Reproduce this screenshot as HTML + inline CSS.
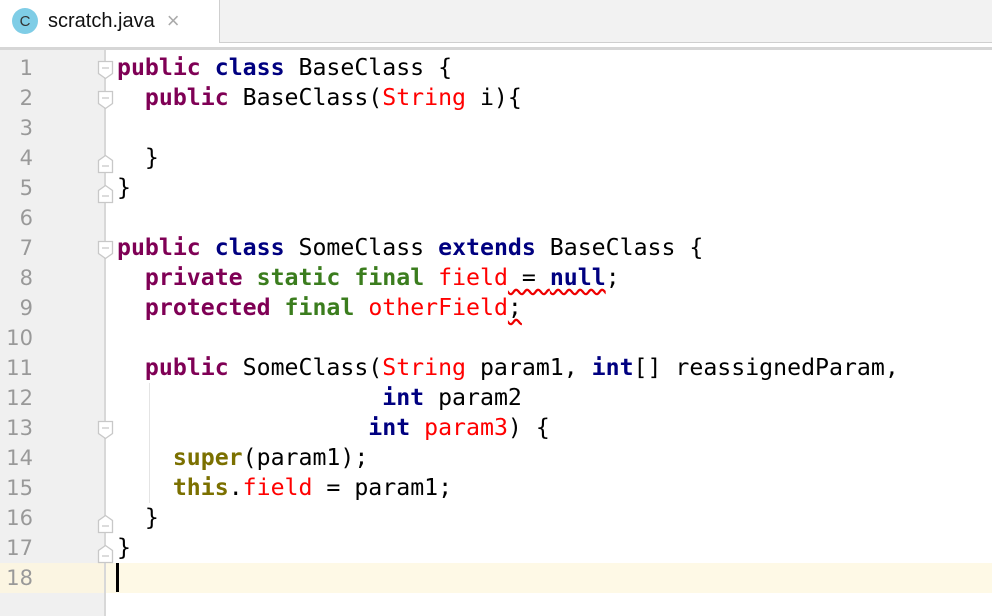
<!DOCTYPE html>
<html><head><meta charset="utf-8"><style>
*{margin:0;padding:0;box-sizing:border-box}
body{width:992px;height:616px;overflow:hidden;background:#fff;position:relative;font-family:"DejaVu Sans Mono",monospace}
.tabbar{position:absolute;left:0;top:0;width:992px;height:50px;background:#fff}
.tabrest{position:absolute;left:219px;top:0;right:0;height:43px;background:#f2f2f2;border-left:1px solid #cfcfcf;border-bottom:1px solid #cfcfcf}
.sep{position:absolute;left:0;top:47px;width:992px;height:3px;background:#d6d6d6}
.tab{position:absolute;left:12px;top:6px;height:30px;display:flex;align-items:center;font-family:"Liberation Sans",sans-serif;font-size:20px;color:#111}
.ic{width:26px;height:26px;border-radius:50%;background:#7fcde6;color:#333;font-size:15px;display:flex;align-items:center;justify-content:center;margin-right:10px}
.x{color:#aaa;font-size:22px;margin-left:12px}
.gutter{position:absolute;left:0;top:50px;width:104px;height:566px;background:#f0f0f0}
.gline{position:absolute;left:104px;top:50px;width:2px;height:566px;background:#d8d8d8}
.hl{position:absolute;left:0;top:563px;width:992px;height:30px;background:#fef9e6}
.hl2{position:absolute;left:0;top:563px;width:104px;height:30px;background:#fbf5e2}
.nums{position:absolute;left:0;width:33px;text-align:right;top:53px;font-family:"DejaVu Sans",sans-serif;font-size:21px;color:#999;line-height:30px}
.code{position:absolute;left:117px;top:53px;font-size:23.2px;line-height:30px;color:#000;white-space:pre}
.k{color:#7f0055;font-weight:bold}.b{color:#000080;font-weight:bold}.g{color:#3b7d1e;font-weight:bold}.r{color:#f00}.o{color:#7b7000;font-weight:bold}
.w{text-decoration:underline wavy #e00;text-decoration-skip-ink:none;text-underline-offset:3px}
.guide{position:absolute;left:149px;top:383px;width:1px;height:120px;background:#e4e4e4}
.caret{position:absolute;left:116px;top:563px;width:3px;height:29px;background:#000}
svg{position:absolute;left:0;top:0}
</style></head><body>
<div class="tabbar"><div class="tabrest"></div><div class="sep"></div>
<div class="tab"><div class="ic">C</div>scratch.java<span class="x">×</span></div></div>
<div class="gutter"></div><div class="hl"></div><div class="hl2"></div><div class="gline"></div>
<div class="guide"></div>
<div class="nums">1<br>2<br>3<br>4<br>5<br>6<br>7<br>8<br>9<br>10<br>11<br>12<br>13<br>14<br>15<br>16<br>17<br>18</div>
<svg width="992" height="616" fill="#fff" stroke="#c8c8c8" stroke-width="1.3">
<g id="o"><path d="M98.5 61.5h14v12l-7 5-7-5z"/><path d="M102 68h7"/></g>
<use href="#o" y="30"/><use href="#o" y="180"/><use href="#o" y="360"/>
<g id="c"><path d="M98.5 172.5h14v-12l-7-5-7 5z"/><path d="M102 166h7"/></g>
<use href="#c" y="30"/><use href="#c" y="360"/><use href="#c" y="390"/>
</svg>
<div class="code"><span class="k">public</span> <span class="b">class</span> BaseClass {
  <span class="k">public</span> BaseClass(<span class="r">String</span> i){

  }
}

<span class="k">public</span> <span class="b">class</span> SomeClass <span class="b">extends</span> BaseClass {
  <span class="k">private</span> <span class="g">static</span> <span class="g">final</span> <span class="r">field</span><span class="w"> = <span class="b">null</span></span>;
  <span class="k">protected</span> <span class="g">final</span> <span class="r">otherField</span><span class="w">;</span>

  <span class="k">public</span> SomeClass(<span class="r">String</span> param1, <span class="b">int</span>[] reassignedParam,
                   <span class="b">int</span> param2
                  <span class="b">int</span> <span class="r">param3</span>) {
    <span class="o">super</span>(param1);
    <span class="o">this</span>.<span class="r">field</span> = param1;
  }
}
</div>
<div class="caret"></div>
</body></html>
